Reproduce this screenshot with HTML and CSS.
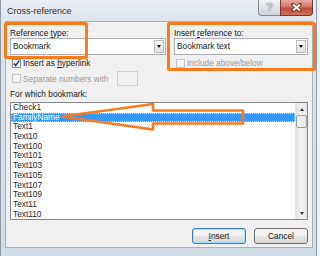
FILE: index.html
```html
<!DOCTYPE html>
<html lang="en">
<head>
    <meta charset="UTF-8">
    <title>Cross-reference</title>
    <link rel="stylesheet" href="styles.css">
</head>
<body>
    <div class="window">
        <div class="titlebar">
            <span class="title">Cross-reference</span>
            <div class="caption">
                <span class="cap-help">?</span>
                <span class="cap-close">
                    <svg width="11" height="9" viewBox="0 0 11 9">
                        <path d="M2 1.5L9 7.5M9 1.5L2 7.5" stroke="#6b2a24" stroke-width="3.4" stroke-linecap="round"/>
                        <path d="M2 1.5L9 7.5M9 1.5L2 7.5" stroke="#fff" stroke-width="2"/>
                    </svg>
                </span>
            </div>
        </div>
        <div class="client">
            <div class="top">
                <div class="col col-left">
                    <div class="label">Reference <u>t</u>ype:</div>
                    <div class="combo"><span class="value">Bookmark</span><span class="drop"></span></div>
                    <div class="check"><span class="box checked">
                        <svg width="7" height="7" viewBox="0 0 7 7"><path d="M0.8 3.6L2.6 5.6L6.2 0.8" fill="none" stroke="#2b3d6b" stroke-width="1.5"/></svg>
                    </span><span>Insert as <u>h</u>yperlink</span></div>
                    <div class="check check-sep disabled"><span class="box"></span><span>Separate numbers with</span><span class="sep-input"></span></div>
                </div>
                <div class="col col-right">
                    <div class="label">Insert <u>r</u>eference to:</div>
                    <div class="combo"><span class="value">Bookmark text</span><span class="drop"></span></div>
                    <div class="check disabled"><span class="box"></span><span>Include above/below</span></div>
                </div>
            </div>
            <div class="label list-label">For which bookmark:</div>
            <div class="listbox">
                <ul class="items">
                    <li>Check1</li>
                    <li class="selected">FamilyName</li>
                    <li>Text1</li>
                    <li>Text10</li>
                    <li>Text100</li>
                    <li>Text101</li>
                    <li>Text103</li>
                    <li>Text105</li>
                    <li>Text107</li>
                    <li>Text109</li>
                    <li>Text11</li>
                    <li>Text110</li>
                </ul>
                <div class="scrollbar">
                    <span class="sb-btn up"></span>
                    <span class="thumb"></span>
                    <span class="track"></span>
                    <span class="sb-btn down"></span>
                </div>
            </div>
            <div class="buttons">
                <button class="default"><u>I</u>nsert</button>
                <button>Cancel</button>
            </div>
        </div>
    </div>
    <!-- orange annotations drawn over the dialog -->
    <svg class="annot" width="320" height="256" viewBox="0 0 320 256">
        <rect x="5.5" y="23.5" width="81" height="34" rx="1" fill="none" stroke="#fa7a1c" stroke-width="3"/>
        <rect x="168.5" y="23.5" width="146" height="46" rx="1" fill="none" stroke="#fa7a1c" stroke-width="3"/>
        <polygon points="62,116.5 153,104 153,110.5 243,110.5 243,123.5 153,123.5 153,129.5" fill="none" stroke="#fa7a1c" stroke-width="2.6" stroke-linejoin="round"/>
    </svg>
</body>
</html>
```

FILE: styles.css
```css
* {
    margin: 0;
    padding: 0;
    box-sizing: border-box;
}
body {
    background: #eef1f3;
    font-family: "Liberation Sans", Arial, sans-serif;
    font-size: 8.3px;
    color: #151515;
}
ul {
    list-style: none;
}
.window {
    width: 317px;
    height: 256px;
    padding: 0 3px 0 4px;
    background: linear-gradient(#e9eef3, #dde5ed 22px, #d2dce5);
    border-left: 1px solid #8d99a5;
    border-right: 1px solid #8d99a5;
}
.titlebar {
    display: flex;
    height: 21px;
}
.title {
    padding: 6px 0 0 2px;
    font-size: 9px;
    color: #2a2a2a;
}
.caption {
    display: flex;
    margin-left: auto;
    height: 16px;
}
.cap-help {
    width: 22px;
    border: 1px solid #7e8792;
    border-top: none;
    border-right: none;
    border-radius: 0 0 0 4px;
    background: linear-gradient(#f3f5f7, #dfe3e8 50%, #cfd5dc);
    text-align: center;
    font-size: 10px;
    line-height: 15px;
    color: #f4f4f4;
    text-shadow: 0 0 1px #444, 0 0 1px #444;
}
.cap-close {
    width: 33px;
    border: 1px solid #6e3a35;
    border-top: none;
    border-radius: 0 0 4px 0;
    background: linear-gradient(#e8aaa1, #d37465 45%, #c24a3c 55%, #d0705c);
    display: flex;
    align-items: center;
    justify-content: center;
}
.client {
    height: 227px;
    border: 1px solid #a4afba;
    background: #f0f0f0;
    padding: 6px 4px 0 4px;
}
.top {
    display: flex;
    gap: 8px;
}
.col-left {
    width: 156px;
}
.col-right {
    width: 134px;
}
.label {
    line-height: 10px;
    white-space: nowrap;
}
.combo {
    display: flex;
    height: 17px;
    border: 1px solid #abadb3;
    background: #fff;
}
.combo .value {
    flex: 1;
    padding-left: 2px;
    line-height: 15px;
}
.drop {
    width: 10px;
    margin: 1px;
    border: 1px solid #b9bcc1;
    background: linear-gradient(#f6f6f6, #e2e2e2);
    display: flex;
    align-items: center;
    justify-content: center;
}
.drop::after {
    content: "";
    border-left: 2.5px solid transparent;
    border-right: 2.5px solid transparent;
    border-top: 3px solid #111;
}
.check {
    display: flex;
    align-items: center;
    height: 10px;
    margin-top: 3px;
    white-space: nowrap;
}
.check-sep {
    height: 15px;
}
.box {
    width: 9px;
    height: 9px;
    margin: 0 2px 0 2px;
    border: 1px solid #8e8f8f;
    background: linear-gradient(135deg, #e4e4e4, #fbfbfb);
    display: flex;
    align-items: center;
    justify-content: center;
}
.box.checked {
    background: #f4f4f4;
}
.disabled {
    color: #9a9a9a;
}
.disabled .box {
    border-color: #c4c4c4;
    background: #f4f4f4;
}
.sep-input {
    width: 21px;
    height: 15px;
    margin-left: 9px;
    border: 1px solid #cfcfcf;
    background: #f0f0f0;
}
.list-label {
    margin-top: 3px;
}
.listbox {
    display: flex;
    height: 118px;
    margin-top: 3px;
    border: 1px solid #828790;
    background: #fff;
}
.items {
    flex: 1;
    overflow: hidden;
}
.items li {
    height: 9.7px;
    line-height: 9.7px;
    padding-left: 2px;
    color: #1e1e1e;
}
.items li.selected {
    background: #3399ff;
    color: #fff;
    outline: 1px dotted #bcdcff;
    outline-offset: -1px;
}
.scrollbar {
    width: 12px;
    display: flex;
    flex-direction: column;
    background: linear-gradient(to right, #e2e2e2, #f0f0f0 40%, #f0f0f0 60%, #e4e4e4);
    border-left: 1px solid #e6e6e6;
}
.sb-btn {
    height: 12px;
    display: flex;
    align-items: center;
    justify-content: center;
}
.sb-btn.up::after {
    content: "";
    border-left: 2.5px solid transparent;
    border-right: 2.5px solid transparent;
    border-bottom: 3px solid #333;
}
.sb-btn.down::after {
    content: "";
    border-left: 2.5px solid transparent;
    border-right: 2.5px solid transparent;
    border-top: 3px solid #333;
}
.thumb {
    height: 13px;
    border: 1px solid #9b9b9b;
    border-radius: 2px;
    background: linear-gradient(to right, #f5f5f5, #e6e6e6);
}
.track {
    flex: 1;
}
.buttons {
    display: flex;
    justify-content: flex-end;
    gap: 8px;
    margin-top: 8px;
}
button {
    width: 54px;
    height: 16px;
    border: 1px solid #707070;
    border-radius: 3px;
    background: linear-gradient(#f2f2f2 45%, #e2e2e2 55%, #d9d9d9);
    font-family: "Liberation Sans", Arial, sans-serif;
    font-size: 8.3px;
    color: #151515;
}
button.default {
    border-color: #3c7fb1;
    box-shadow: inset 0 0 0 1px #9fe2f8;
}
.annot {
    position: absolute;
    top: 0;
    left: 0;
    pointer-events: none;
}
```
